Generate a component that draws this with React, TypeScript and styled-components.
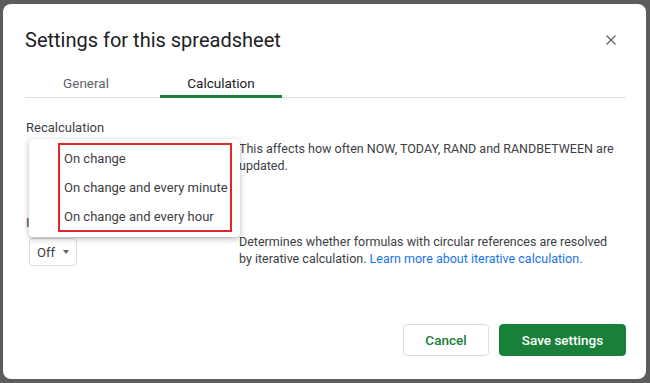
import React from "react";
import styled, { createGlobalStyle } from "styled-components";

const GlobalStyle = createGlobalStyle`
  html, body {
    margin: 0;
    padding: 0;
    background: #5c5c5c;
  }
  body {
    font-family: Roboto, "Liberation Sans", Arial, sans-serif;
  }
`;

const Backdrop = styled.div`
  width: 650px;
  height: 383px;
  box-sizing: border-box;
  padding: 4px 4px 4px 3px;
  background: #5c5c5c;
  display: flex;
`;

const Dialog = styled.div`
  flex: 1;
  display: flex;
  flex-direction: column;
  background: #ffffff;
  border-radius: 8px;
  padding: 22px 20px 23px 22px;
  color: #3c4043;
`;

const Header = styled.div`
  display: flex;
  align-items: center;
  justify-content: space-between;
  height: 28px;
`;

const Title = styled.h1`
  margin: 0;
  font-size: 20px;
  font-weight: 400;
  line-height: 28px;
  color: #202124;
`;

const CloseButton = styled.button`
  border: 0;
  background: none;
  padding: 0;
  margin-right: 10px;
  width: 10px;
  height: 10px;
  display: flex;
  cursor: pointer;
`;

const TabBar = styled.div`
  display: flex;
  gap: 13px;
  margin-top: 19px;
  border-bottom: 1px solid #e0e0e0;
`;

const Tab = styled.div<{ $active?: boolean }>`
  width: 122px;
  text-align: center;
  font-size: 13.5px;
  line-height: 20px;
  padding-bottom: 2px;
  margin-bottom: -1px;
  color: ${(p) => (p.$active ? "#202124" : "#5f6368")};
  border-bottom: 3px solid ${(p) => (p.$active ? "#188038" : "transparent")};
`;

const Section = styled.div<{ $top: number }>`
  margin-top: ${(p) => p.$top}px;
`;

const Label = styled.div`
  font-size: 13px;
  line-height: 20px;
  color: #3c4043;
  margin-left: 1px;
`;

const Row = styled.div`
  display: grid;
  grid-template-columns: 214px 1fr;
  align-items: start;
`;

const SelectCell = styled.div<{ $offset: number }>`
  position: relative;
  padding-left: 4px;
  margin-top: ${(p) => p.$offset}px;
`;

const Select = styled.div`
  display: inline-flex;
  align-items: center;
  justify-content: space-between;
  height: 28px;
  box-sizing: border-box;
  padding: 0 7px 0 7px;
  gap: 8px;
  border: 1px solid #dadce0;
  border-radius: 4px;
  font-size: 13px;
  color: #3c4043;
`;

const Caret = styled.span`
  width: 0;
  height: 0;
  border-left: 3.5px solid transparent;
  border-right: 3.5px solid transparent;
  border-top: 4px solid #5f6368;
`;

const Description = styled.p<{ $offset: number }>`
  margin: ${(p) => p.$offset}px 0 0;
  max-width: 378px;
  font-size: 12.5px;
  line-height: 17px;
  color: #3c4043;
`;

const Link = styled.a`
  color: #1a73e8;
  text-decoration: none;
`;

const Menu = styled.div`
  position: absolute;
  left: 4px;
  top: 0;
  width: 211px;
  box-sizing: border-box;
  padding: 5px 0 6px;
  background: #ffffff;
  border-radius: 4px;
  box-shadow: 0 2px 6px rgba(60, 64, 67, 0.3), 0 1px 2px rgba(60, 64, 67, 0.15);
  z-index: 2;
`;

const MenuItem = styled.div`
  height: 29px;
  line-height: 29px;
  padding-left: 35px;
  font-size: 13px;
  color: #3c4043;
  white-space: nowrap;
`;

const Highlight = styled.div`
  position: absolute;
  left: 29px;
  top: 4px;
  width: 174px;
  height: 89px;
  box-sizing: border-box;
  border: 2px solid #e3262b;
  pointer-events: none;
`;

const Footer = styled.div`
  margin-top: auto;
  display: flex;
  justify-content: flex-end;
  gap: 10px;
`;

const Button = styled.button<{ $primary?: boolean }>`
  height: 32px;
  width: ${(p) => (p.$primary ? "127px" : "86px")};
  box-sizing: border-box;
  padding: 0;
  border-radius: 4px;
  font-family: Roboto, "Liberation Sans", Arial, sans-serif;
  font-size: 13.5px;
  font-weight: 500;
  cursor: pointer;
  border: 1px solid ${(p) => (p.$primary ? "#188038" : "#dadce0")};
  background: ${(p) => (p.$primary ? "#188038" : "#ffffff")};
  color: ${(p) => (p.$primary ? "#ffffff" : "#188038")};
`;

const recalcOptions = [
  "On change",
  "On change and every minute",
  "On change and every hour",
];

export default function App() {
  return (
    <>
      <GlobalStyle />
      <Backdrop>
        <Dialog>
          <Header>
            <Title>Settings for this spreadsheet</Title>
            <CloseButton aria-label="Close">
              <svg width="10" height="10" viewBox="0 0 10 10">
                <path d="M0.5 0.5L9.5 9.5M9.5 0.5L0.5 9.5" stroke="#5f6368" strokeWidth="1.3" />
              </svg>
            </CloseButton>
          </Header>

          <TabBar>
            <Tab>General</Tab>
            <Tab $active>Calculation</Tab>
          </TabBar>

          <Section $top={20}>
            <Label>Recalculation</Label>
            <Row>
              <SelectCell $offset={1}>
                <Select>
                  On change
                  <Caret />
                </Select>
                <Menu>
                  {recalcOptions.map((o) => (
                    <MenuItem key={o}>{o}</MenuItem>
                  ))}
                  <Highlight />
                </Menu>
              </SelectCell>
              <Description $offset={2}>
                This affects how often NOW, TODAY, RAND and RANDBETWEEN are
                updated.
              </Description>
            </Row>
          </Section>

          <Section $top={39}>
            <Label>Iterative calculation</Label>
            <Row>
              <SelectCell $offset={5}>
                <Select>
                  Off
                  <Caret />
                </Select>
              </SelectCell>
              <Description $offset={0}>
                Determines whether formulas with circular references are resolved
                by iterative calculation.{" "}
                <Link href="#">Learn more about iterative calculation.</Link>
              </Description>
            </Row>
          </Section>

          <Footer>
            <Button>Cancel</Button>
            <Button $primary>Save settings</Button>
          </Footer>
        </Dialog>
      </Backdrop>
    </>
  );
}
